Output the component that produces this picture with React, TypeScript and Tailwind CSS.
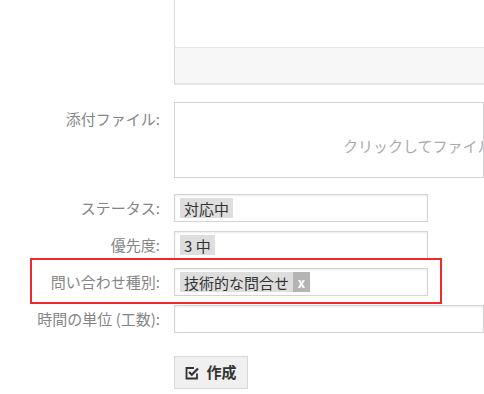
import React from 'react';

const font = { fontFamily: '"Noto Sans CJK JP", "Noto Sans", sans-serif' };

const Label = ({ text }: { text: string }) => (
  <div className="w-[174px] shrink-0 pr-[14px] text-right text-[15px] text-[#858585]">{text}</div>
);

const Tag = ({ text, removable }: { text: string; removable?: boolean }) => (
  <span className="flex h-[20px] items-center bg-[#dedede] text-[15px] leading-none text-[#333]">
    <span className="px-[4px]">{text}</span>
    {removable && (
      <span className="flex h-full w-[17px] items-center justify-center bg-[#b4b4b4] text-[13px] font-bold text-white">x</span>
    )}
  </span>
);

const SelectBox = ({ children }: { children?: React.ReactNode }) => (
  <div className="flex h-[28px] w-[254px] items-center border border-[#d4d4d4] bg-white px-[5px] shadow-[inset_0_1px_2px_rgba(0,0,0,0.08)]">
    {children}
  </div>
);

export default function App() {
  return (
    <div className="relative h-[394px] w-[484px] overflow-hidden bg-white" style={font}>
      {/* editor bottom */}
      <div className="ml-[174px] flex flex-col">
        <div className="h-[48px] border-b border-l border-[#d9d9d9] border-b-[#e6e6e6] bg-white" />
        <div className="h-[37px] border-b-2 border-l border-[#d9d9d9] border-b-[#e6e6e6] bg-[#f7f7f7]" />
      </div>

      {/* attachment */}
      <div className="mt-[17px] flex">
        <div className="pt-[6px]">
          <Label text="添付ファイル:" />
        </div>
        <div className="flex h-[76px] flex-1 items-end overflow-hidden border border-[#d4d4d4] bg-white pb-[20px] pl-[168px] whitespace-nowrap text-[15px] text-[#aaaaaa]">
          クリックしてファイル
        </div>
      </div>

      <div className="mt-[16px] flex flex-col gap-[9px]">
        <div className="flex items-center">
          <Label text="ステータス:" />
          <SelectBox>
            <Tag text="対応中" />
          </SelectBox>
        </div>
        <div className="flex items-center">
          <Label text="優先度:" />
          <SelectBox>
            <Tag text="3 中" />
          </SelectBox>
        </div>
        <div className="flex items-center">
          <Label text="問い合わせ種別:" />
          <SelectBox>
            <Tag text="技術的な問合せ" removable />
          </SelectBox>
        </div>
        <div className="flex items-center">
          <Label text="時間の単位 (工数):" />
          <div className="h-[28px] flex-1 border border-[#d4d4d4] bg-white shadow-[inset_0_1px_2px_rgba(0,0,0,0.08)]" />
        </div>
      </div>

      <div className="ml-[174px] mt-[23px]">
        <button className="flex h-[33px] w-[74px] items-center justify-center gap-[7px] border border-[#d8d8d8] bg-[#f0f0f0] text-[15px] font-bold text-[#333]">
          <svg width="14" height="14" viewBox="0 0 14 14" fill="none">
            <path d="M12 7.5V12.5H1.5V2H9" stroke="#333" strokeWidth="1.8" />
            <path d="M4 6L6.8 8.8L13 2.5" stroke="#333" strokeWidth="2.2" />
          </svg>
          作成
        </button>
      </div>

      {/* highlight */}
      <div className="pointer-events-none absolute left-[30px] top-[258px] h-[46px] w-[412px] border-2 border-[#ee2a2a]" />
    </div>
  );
}
